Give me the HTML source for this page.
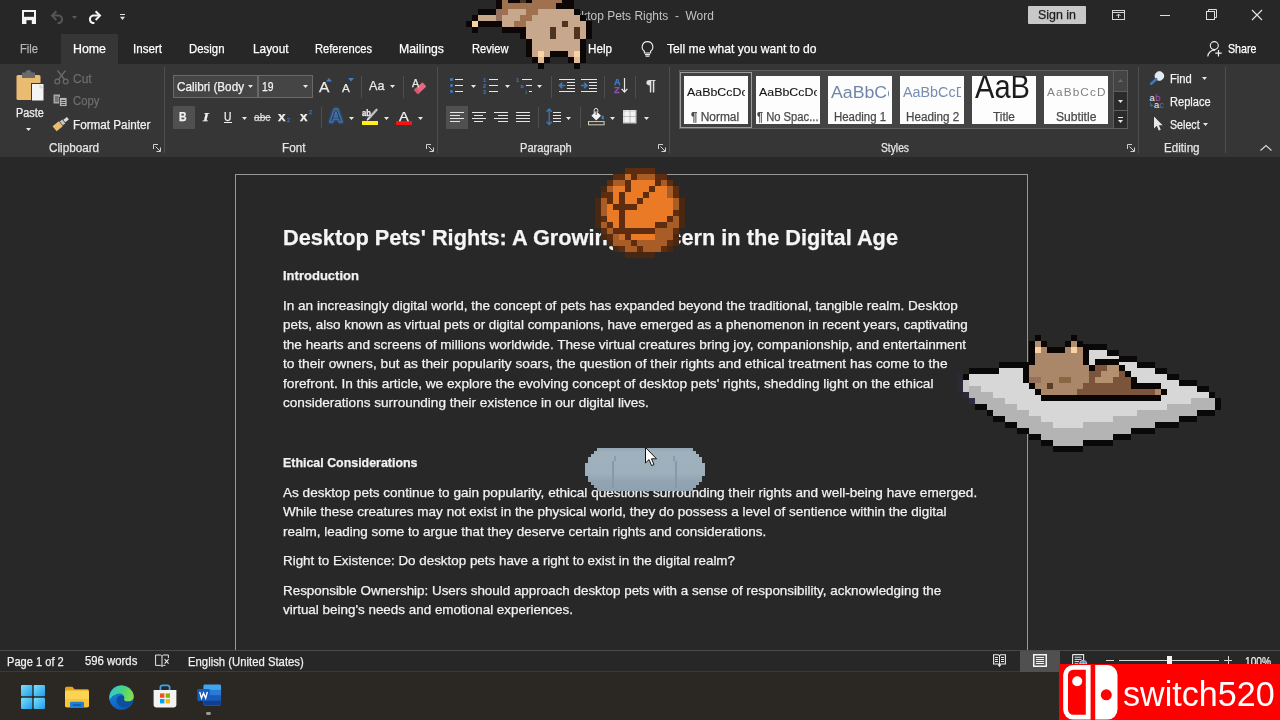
<!DOCTYPE html>
<html><head><meta charset="utf-8"><title>Desktop Pets Rights - Word</title>
<style>
*{box-sizing:border-box;margin:0;padding:0}
html,body{width:1280px;height:720px;overflow:hidden;background:#262626;font-family:"Liberation Sans",sans-serif;color:#fff}
#root{position:absolute;left:0;top:0;width:1280px;height:720px;overflow:hidden;background:#262626}
.a{position:absolute}
.t{position:absolute;white-space:pre;line-height:1;transform-origin:0 0;color:#fff;-webkit-text-stroke:0.25px currentColor}
.sep{position:absolute;width:1px;background:#555}
svg{position:absolute;overflow:visible}
.px{shape-rendering:crispEdges}
</style></head><body><div id="root">

<div class="a" style="left:0px;top:0px;width:1280px;height:64px;background:#272727;"></div>
<div class="a" style="left:61px;top:34px;width:57px;height:30px;background:#363636;"></div>
<div class="a" style="left:0px;top:64px;width:1280px;height:93px;background:#363636;"></div>
<div class="a" style="left:0px;top:157px;width:1280px;height:493px;background:#282828;"></div>
<div class="a" style="left:235px;top:174px;width:793px;height:1px;background:#989898;"></div>
<div class="a" style="left:235px;top:174px;width:1px;height:476px;background:#989898;"></div>
<div class="a" style="left:1027px;top:174px;width:1px;height:476px;background:#989898;"></div>
<div class="a" style="left:0px;top:650px;width:1280px;height:22px;background:#272727;border-top:1px solid #4a4a4a;border-bottom:1px solid #3a3a3a;"></div>
<div class="a" style="left:1020px;top:651px;width:40px;height:21px;background:#505050;"></div>
<div class="a" style="left:0px;top:672px;width:1280px;height:48px;background:#2b2723;"></div>
<svg style="left:22px;top:10px;" width="14" height="14" viewBox="0 0 14 14"><rect x="1" y="1" width="12" height="12" fill="none" stroke="#f4f4f4" stroke-width="2"/><rect x="1" y="6.8" width="12" height="7.2" fill="#f4f4f4"/><rect x="4.4" y="10.2" width="5.4" height="3.8" fill="#262626"/><rect x="10.6" y="0" width="3.4" height="2" fill="#f4f4f4"/></svg>
<svg style="left:50px;top:10px;" width="16" height="14" viewBox="0 0 16 14"><path d="M2,5.6 H9.4 A3.9,3.9 0 0 1 9.4,13 H7.6" fill="none" stroke="#565656" stroke-width="2"/><path d="M6.4,1.2 L2,5.6 L6.4,10" fill="none" stroke="#565656" stroke-width="2"/></svg>
<svg style="left:72px;top:15.6px;" width="5" height="3" viewBox="0 0 5 3"><path d="M0,0 L5,0 L2.5,3 Z" fill="#5c5c5c"/></svg>
<svg style="left:86px;top:10px;" width="16" height="14" viewBox="0 0 16 14"><path d="M14,5.6 H6.6 A3.9,3.9 0 0 0 6.6,13 H8.4" fill="none" stroke="#f4f4f4" stroke-width="2"/><path d="M9.6,1.2 L14,5.6 L9.6,10" fill="none" stroke="#f4f4f4" stroke-width="2"/></svg>
<svg style="left:120px;top:14.2px;" width="6" height="7" viewBox="0 0 6 7"><rect x="0" y="0" width="5" height="1" fill="#e0e0e0"/><path d="M0,2.8 L5,2.8 L2.5,6 Z" fill="#e0e0e0"/></svg>
<div class="a" style="left:1028px;top:6px;width:58px;height:18px;background:#c8c8c8;border-radius:1px;"></div>
<svg style="left:1112px;top:10px;" width="13" height="10" viewBox="0 0 13 10"><rect x="0.5" y="0.5" width="12" height="9" fill="none" stroke="#d8d8d8"/><path d="M0.5,2.5 H12.5" stroke="#d8d8d8"/><path d="M6.5,8 V4.2 M4.5,6 L6.5,4 L8.5,6" fill="none" stroke="#d8d8d8"/></svg>
<div class="a" style="left:1160px;top:15px;width:10px;height:1px;background:#e0e0e0;"></div>
<svg style="left:1206px;top:9px;" width="11" height="11" viewBox="0 0 11 11"><rect x="0.5" y="2.5" width="8" height="8" fill="none" stroke="#e0e0e0"/><path d="M2.5,2.5 V0.5 H10.5 V8.5 H8.5" fill="none" stroke="#e0e0e0"/></svg>
<svg style="left:1252px;top:10px;" width="10" height="10" viewBox="0 0 10 10"><path d="M0,0 L10,10 M10,0 L0,10" stroke="#e6e6e6" stroke-width="1.1"/></svg>
<svg style="left:641px;top:41px;" width="13" height="16" viewBox="0 0 13 16"><path d="M6.5,0.6 A5.3,5.3 0 0 1 9.6,10.2 V12 H3.4 V10.2 A5.3,5.3 0 0 1 6.5,0.6 Z" fill="none" stroke="#f0f0f0" stroke-width="1.1"/><path d="M4,13.6 H9 M4.6,15.3 H8.4" stroke="#f0f0f0" stroke-width="1.1"/></svg>
<svg style="left:1207px;top:41px;" width="16" height="17" viewBox="0 0 16 17"><circle cx="7.3" cy="4.6" r="4" fill="none" stroke="#f0f0f0" stroke-width="1.1"/><path d="M0.8,15.5 A6.6,6.6 0 0 1 8.2,9.2" fill="none" stroke="#f0f0f0" stroke-width="1.1"/><path d="M11.5,9 V15.4 M8.3,12.2 H14.7" stroke="#f0f0f0" stroke-width="1.2"/></svg>
<svg style="left:16px;top:71px;" width="29" height="31" viewBox="0 0 29 31"><rect x="0.5" y="4" width="24" height="25" rx="1.5" fill="#e9bc72"/><path d="M6,1.5 H9.5 A3,2.6 0 0 1 15.5,1.5 H19 V7 H6 Z" fill="#6a6a6a"/><rect x="15.5" y="12.5" width="12.5" height="17.5" fill="#f4f4f4" stroke="#363636" stroke-width="1"/><path d="M23.5,13 V17.5 H28" fill="#d8d8d8" stroke="none"/></svg>
<svg style="left:26px;top:127.5px;" width="5" height="3" viewBox="0 0 5 3"><path d="M0,0 L5,0 L2.5,3 Z" fill="#e8e8e8"/></svg>
<svg style="left:54px;top:70px;" width="15" height="15" viewBox="0 0 15 15"><path d="M3.5,0.5 L10.5,9.5 M11.5,0.5 L4.5,9.5" stroke="#6a6a6a" stroke-width="1.3" fill="none"/><circle cx="3.3" cy="11.6" r="2.4" fill="none" stroke="#6a6a6a" stroke-width="1.2"/><circle cx="11.7" cy="11.6" r="2.4" fill="none" stroke="#6a6a6a" stroke-width="1.2"/></svg>
<svg style="left:53px;top:94px;" width="15" height="13" viewBox="0 0 15 13"><rect x="0.5" y="0.5" width="6.5" height="9" fill="#a8a8a8"/><path d="M2,3 H5.5 M2,5 H5.5 M2,7 H5.5" stroke="#363636" stroke-width="0.9"/><rect x="6.5" y="3.5" width="7.5" height="9" fill="#b8b8b8" stroke="#363636" stroke-width="0.8"/><path d="M8.3,6.5 H12.3 M8.3,8.5 H12.3 M8.3,10.5 H12.3" stroke="#363636" stroke-width="0.9"/></svg>
<svg style="left:53px;top:116px;" width="17" height="15" viewBox="0 0 17 15"><g transform="rotate(-38 8 8)"><rect x="0" y="4.5" width="8" height="6.5" fill="#e9bc72"/><rect x="8.6" y="5.2" width="3.2" height="5" fill="#c4c4c4"/><rect x="12.4" y="6.2" width="4.6" height="3" fill="#dcdcdc"/></g></svg>
<svg style="left:153px;top:144px;" width="8" height="8" viewBox="0 0 8 8"><path d="M0.5,5 V0.5 H5" fill="none" stroke="#d0d0d0" stroke-width="1"/><path d="M2.5,2.5 L7,7 M7.5,3.5 V7.5 H3.5" fill="none" stroke="#d0d0d0" stroke-width="1"/></svg>
<div class="a" style="left:164px;top:67px;width:1px;height:86px;background:#4f4f4f;"></div>
<div class="a" style="left:173px;top:75px;width:85px;height:23px;background:#454545;border:1px solid #696969;"></div>
<div class="a" style="left:258px;top:75px;width:55px;height:23px;background:#454545;border:1px solid #696969;border-left:1px solid #696969;"></div>
<svg style="left:248px;top:85px;" width="5" height="3" viewBox="0 0 5 3"><path d="M0,0 L5,0 L2.5,3 Z" fill="#e8e8e8"/></svg>
<svg style="left:303px;top:85px;" width="5" height="3" viewBox="0 0 5 3"><path d="M0,0 L5,0 L2.5,3 Z" fill="#e8e8e8"/></svg>
<svg style="left:326px;top:78px;" width="6" height="4" viewBox="0 0 6 4"><path d="M0,3.6 L3,0 L6,3.6 Z" fill="#3e7fc8"/></svg>
<svg style="left:348px;top:78px;" width="6" height="4" viewBox="0 0 6 4"><path d="M0,0 L6,0 L3,3.6 Z" fill="#3e7fc8"/></svg>
<div class="a" style="left:361px;top:76px;width:1px;height:22px;background:#4f4f4f;"></div>
<svg style="left:389.5px;top:85px;" width="5" height="3" viewBox="0 0 5 3"><path d="M0,0 L5,0 L2.5,3 Z" fill="#e8e8e8"/></svg>
<div class="a" style="left:403px;top:76px;width:1px;height:22px;background:#4f4f4f;"></div>
<svg style="left:413px;top:80px;" width="16" height="15" viewBox="0 0 16 15"><g transform="rotate(-42 8 8)"><rect x="1.5" y="4.6" width="11.5" height="6" rx="0.8" fill="#e8677d"/><rect x="1.5" y="4.6" width="3.2" height="6" fill="#d6566c"/></g></svg>
<div class="a" style="left:173px;top:106px;width:22px;height:23px;background:#505050;"></div>
<div class="a" style="left:223.5px;top:122.3px;width:8px;height:1px;background:#f0f0f0;"></div>
<svg style="left:241.6px;top:116.5px;" width="5" height="3" viewBox="0 0 5 3"><path d="M0,0 L5,0 L2.5,3 Z" fill="#e8e8e8"/></svg>
<div class="a" style="left:253.5px;top:117px;width:17.5px;height:1px;background:#dcdcdc;"></div>
<div class="a" style="left:321px;top:107px;width:1px;height:21px;background:#4f4f4f;"></div>
<svg style="left:328px;top:107px;" width="18" height="18" viewBox="0 0 18 18"><defs><filter id="gl" x="-30%" y="-30%" width="160%" height="160%"><feGaussianBlur stdDeviation="1.1"/></filter></defs><text x="1.6" y="15.4" font-family="Liberation Sans" font-size="18" font-weight="700" fill="none" stroke="#2f66ad" stroke-width="2.4" filter="url(#gl)" opacity="0.8" textLength="13" lengthAdjust="spacingAndGlyphs">A</text><text x="1.6" y="15.4" font-family="Liberation Sans" font-size="18" font-weight="700" fill="#363636" stroke="#3f7dc4" stroke-width="1" textLength="13" lengthAdjust="spacingAndGlyphs">A</text></svg>
<svg style="left:349px;top:116.5px;" width="5" height="3" viewBox="0 0 5 3"><path d="M0,0 L5,0 L2.5,3 Z" fill="#e8e8e8"/></svg>
<svg style="left:365px;top:109px;" width="13" height="12" viewBox="0 0 13 12"><path d="M11.6,0.8 L3.6,9.6" stroke="#bdbdbd" stroke-width="2.4" stroke-linecap="round"/><path d="M3.8,9.2 L2,11.4" stroke="#e8e8e8" stroke-width="1.4"/></svg>
<div class="a" style="left:362px;top:121px;width:16.4px;height:4px;background:#ffee1a;"></div>
<svg style="left:384px;top:116.5px;" width="5" height="3" viewBox="0 0 5 3"><path d="M0,0 L5,0 L2.5,3 Z" fill="#e8e8e8"/></svg>
<div class="a" style="left:396px;top:121px;width:16.4px;height:4.2px;background:#f01414;"></div>
<svg style="left:418px;top:116.5px;" width="5" height="3" viewBox="0 0 5 3"><path d="M0,0 L5,0 L2.5,3 Z" fill="#e8e8e8"/></svg>
<svg style="left:426px;top:144px;" width="8" height="8" viewBox="0 0 8 8"><path d="M0.5,5 V0.5 H5" fill="none" stroke="#d0d0d0" stroke-width="1"/><path d="M2.5,2.5 L7,7 M7.5,3.5 V7.5 H3.5" fill="none" stroke="#d0d0d0" stroke-width="1"/></svg>
<div class="a" style="left:437px;top:67px;width:1px;height:86px;background:#4f4f4f;"></div>
<svg style="left:450px;top:79px;" width="18" height="16" viewBox="0 0 18 16"><rect x="0" y="-1" width="3" height="3" rx="1.2" fill="#3c79bd"/><rect x="5" y="0" width="8" height="1" fill="#e6e6e6" shape-rendering="crispEdges"/><rect x="0" y="5" width="3" height="3" rx="1.2" fill="#3c79bd"/><rect x="5" y="6" width="8" height="1" fill="#e6e6e6" shape-rendering="crispEdges"/><rect x="0" y="11" width="3" height="3" rx="1.2" fill="#3c79bd"/><rect x="5" y="12" width="8" height="1" fill="#e6e6e6" shape-rendering="crispEdges"/></svg>
<svg style="left:471px;top:85px;" width="5" height="3" viewBox="0 0 5 3"><path d="M0,0 L5,0 L2.5,3 Z" fill="#e8e8e8"/></svg>
<svg style="left:483px;top:79px;" width="18" height="16" viewBox="0 0 18 16"><text x="0" y="2.6" font-family="Liberation Sans" font-size="5.8" font-weight="700" fill="#3c79bd">1</text><rect x="6" y="0" width="9" height="1" fill="#e6e6e6" shape-rendering="crispEdges"/><text x="0" y="8.6" font-family="Liberation Sans" font-size="5.8" font-weight="700" fill="#3c79bd">2</text><rect x="6" y="6" width="9" height="1" fill="#e6e6e6" shape-rendering="crispEdges"/><text x="0" y="14.6" font-family="Liberation Sans" font-size="5.8" font-weight="700" fill="#3c79bd">3</text><rect x="6" y="12" width="9" height="1" fill="#e6e6e6" shape-rendering="crispEdges"/></svg>
<svg style="left:505px;top:85px;" width="5" height="3" viewBox="0 0 5 3"><path d="M0,0 L5,0 L2.5,3 Z" fill="#e8e8e8"/></svg>
<svg style="left:516px;top:79px;" width="18" height="16" viewBox="0 0 18 16"><text x="0" y="3.2" font-family="Liberation Sans" font-size="5.8" font-weight="700" fill="#3c79bd">1</text><rect x="6" y="0" width="10" height="1" fill="#e6e6e6" shape-rendering="crispEdges"/><text x="4.6" y="9" font-family="Liberation Sans" font-size="5.8" font-weight="700" fill="#3c79bd">a</text><rect x="10" y="6" width="6" height="1" fill="#e6e6e6" shape-rendering="crispEdges"/><text x="9.6" y="14.8" font-family="Liberation Sans" font-size="5.8" font-weight="700" fill="#3c79bd">i</text><rect x="13" y="12" width="3" height="1" fill="#e6e6e6" shape-rendering="crispEdges"/></svg>
<svg style="left:537.2px;top:85px;" width="5" height="3" viewBox="0 0 5 3"><path d="M0,0 L5,0 L2.5,3 Z" fill="#e8e8e8"/></svg>
<div class="a" style="left:551px;top:76px;width:1px;height:22px;background:#4f4f4f;"></div>
<svg style="left:559px;top:79px;" width="16" height="14" viewBox="0 0 16 14"><g shape-rendering="crispEdges"><rect x="0" y="0" width="16" height="1" fill="#e6e6e6"/><rect x="0" y="12" width="16" height="1" fill="#e6e6e6"/><rect x="8" y="3" width="8" height="1" fill="#e6e6e6"/><rect x="8" y="6" width="8" height="1" fill="#e6e6e6"/><rect x="8" y="9" width="8" height="1" fill="#e6e6e6"/></g><path d="M6.4,6.5 H0.8 M3.2,3.8 L0.5,6.5 L3.2,9.2" fill="none" stroke="#3c79bd" stroke-width="1.7"/></svg>
<svg style="left:581px;top:79px;" width="16" height="14" viewBox="0 0 16 14"><g shape-rendering="crispEdges"><rect x="0" y="0" width="16" height="1" fill="#e6e6e6"/><rect x="0" y="12" width="16" height="1" fill="#e6e6e6"/><rect x="8" y="3" width="8" height="1" fill="#e6e6e6"/><rect x="8" y="6" width="8" height="1" fill="#e6e6e6"/><rect x="8" y="9" width="8" height="1" fill="#e6e6e6"/></g><path d="M0,6.5 H5.6 M3.2,3.8 L5.9,6.5 L3.2,9.2" fill="none" stroke="#3c79bd" stroke-width="1.7"/></svg>
<div class="a" style="left:604px;top:76px;width:1px;height:22px;background:#4f4f4f;"></div>
<svg style="left:621px;top:78px;" width="7" height="15" viewBox="0 0 7 15"><path d="M3.5,0 V14 M0.6,10.8 L3.5,14 L6.4,10.8" fill="none" stroke="#e8e8e8" stroke-width="1.2"/></svg>
<div class="a" style="left:635px;top:76px;width:1px;height:22px;background:#4f4f4f;"></div>
<div class="a" style="left:446px;top:106px;width:22px;height:23px;background:#505050;"></div>
<svg style="left:450px;top:112px;" width="15" height="12" viewBox="0 0 15 12"><rect x="0" y="0" width="14" height="1" fill="#e6e6e6" shape-rendering="crispEdges"/><rect x="0" y="3" width="10" height="1" fill="#e6e6e6" shape-rendering="crispEdges"/><rect x="0" y="6" width="14" height="1" fill="#e6e6e6" shape-rendering="crispEdges"/><rect x="0" y="9" width="10" height="1" fill="#e6e6e6" shape-rendering="crispEdges"/></svg>
<svg style="left:472px;top:112px;" width="15" height="12" viewBox="0 0 15 12"><rect x="0" y="0" width="14" height="1" fill="#e6e6e6" shape-rendering="crispEdges"/><rect x="2" y="3" width="9" height="1" fill="#e6e6e6" shape-rendering="crispEdges"/><rect x="0" y="6" width="14" height="1" fill="#e6e6e6" shape-rendering="crispEdges"/><rect x="2" y="9" width="9" height="1" fill="#e6e6e6" shape-rendering="crispEdges"/></svg>
<svg style="left:494px;top:112px;" width="15" height="12" viewBox="0 0 15 12"><rect x="0" y="0" width="14" height="1" fill="#e6e6e6" shape-rendering="crispEdges"/><rect x="4" y="3" width="10" height="1" fill="#e6e6e6" shape-rendering="crispEdges"/><rect x="0" y="6" width="14" height="1" fill="#e6e6e6" shape-rendering="crispEdges"/><rect x="4" y="9" width="10" height="1" fill="#e6e6e6" shape-rendering="crispEdges"/></svg>
<svg style="left:516px;top:112px;" width="15" height="12" viewBox="0 0 15 12"><rect x="0" y="0" width="14" height="1" fill="#e6e6e6" shape-rendering="crispEdges"/><rect x="0" y="3" width="14" height="1" fill="#e6e6e6" shape-rendering="crispEdges"/><rect x="0" y="6" width="14" height="1" fill="#e6e6e6" shape-rendering="crispEdges"/><rect x="0" y="9" width="14" height="1" fill="#e6e6e6" shape-rendering="crispEdges"/></svg>
<div class="a" style="left:538px;top:107px;width:1px;height:21px;background:#4f4f4f;"></div>
<svg style="left:546px;top:108px;" width="16" height="18" viewBox="0 0 16 18"><path d="M3.2,1 V16.6 M0.6,3.8 L3.2,1 L5.8,3.8 M0.6,13.8 L3.2,16.6 L5.8,13.8" fill="none" stroke="#3c79bd" stroke-width="1.25"/><rect x="7" y="4" width="8" height="1" fill="#e6e6e6" shape-rendering="crispEdges"/><rect x="7" y="7" width="8" height="1" fill="#e6e6e6" shape-rendering="crispEdges"/><rect x="7" y="10" width="8" height="1" fill="#e6e6e6" shape-rendering="crispEdges"/><rect x="7" y="13" width="8" height="1" fill="#e6e6e6" shape-rendering="crispEdges"/></svg>
<svg style="left:566px;top:116.5px;" width="5" height="3" viewBox="0 0 5 3"><path d="M0,0 L5,0 L2.5,3 Z" fill="#e8e8e8"/></svg>
<div class="a" style="left:580px;top:107px;width:1px;height:21px;background:#4f4f4f;"></div>
<svg style="left:588px;top:108px;" width="18" height="18" viewBox="0 0 18 18"><path d="M8.2,3 L13,7.8 L8.2,12.6 L3.4,7.8 Z" fill="#f4f4f4"/><path d="M6.2,5 V2.2 A1.8,1.8 0 0 1 9.8,2.2 V4" fill="none" stroke="#e0e0e0" stroke-width="1"/><path d="M8.2,3.4 V7" stroke="#363636" stroke-width="0.9"/><path d="M14.8,7 C16.4,9.4 16.6,10.8 14.8,11.6 C13,10.8 13.2,9.4 14.8,7 Z" fill="#3e7fc8"/><rect x="0.5" y="13.6" width="15.6" height="3.2" fill="none" stroke="#d9cdbb" stroke-width="1"/></svg>
<svg style="left:610px;top:116.5px;" width="5" height="3" viewBox="0 0 5 3"><path d="M0,0 L5,0 L2.5,3 Z" fill="#e8e8e8"/></svg>
<svg style="left:623px;top:110px;" width="13.4" height="13.4" viewBox="0 0 13.4 13.4"><rect x="0" y="0" width="13.4" height="13.4" fill="#f2f2f2"/><rect x="0.5" y="6" width="1" height="1" fill="#8c8c8c"/><rect x="6.5" y="0.5" width="1" height="1" fill="#8c8c8c"/><rect x="0.5" y="0.5" width="1" height="1" fill="#a8a8a8"/><rect x="0.5" y="12" width="1" height="1" fill="#a8a8a8"/><rect x="0.5" y="0.5" width="1" height="1" fill="#a8a8a8"/><rect x="12" y="0.5" width="1" height="1" fill="#a8a8a8"/><rect x="2.5" y="6" width="1" height="1" fill="#8c8c8c"/><rect x="6.5" y="2.5" width="1" height="1" fill="#8c8c8c"/><rect x="2.5" y="0.5" width="1" height="1" fill="#a8a8a8"/><rect x="2.5" y="12" width="1" height="1" fill="#a8a8a8"/><rect x="0.5" y="2.5" width="1" height="1" fill="#a8a8a8"/><rect x="12" y="2.5" width="1" height="1" fill="#a8a8a8"/><rect x="4.5" y="6" width="1" height="1" fill="#8c8c8c"/><rect x="6.5" y="4.5" width="1" height="1" fill="#8c8c8c"/><rect x="4.5" y="0.5" width="1" height="1" fill="#a8a8a8"/><rect x="4.5" y="12" width="1" height="1" fill="#a8a8a8"/><rect x="0.5" y="4.5" width="1" height="1" fill="#a8a8a8"/><rect x="12" y="4.5" width="1" height="1" fill="#a8a8a8"/><rect x="6.5" y="6" width="1" height="1" fill="#8c8c8c"/><rect x="6.5" y="6.5" width="1" height="1" fill="#8c8c8c"/><rect x="6.5" y="0.5" width="1" height="1" fill="#a8a8a8"/><rect x="6.5" y="12" width="1" height="1" fill="#a8a8a8"/><rect x="0.5" y="6.5" width="1" height="1" fill="#a8a8a8"/><rect x="12" y="6.5" width="1" height="1" fill="#a8a8a8"/><rect x="8.5" y="6" width="1" height="1" fill="#8c8c8c"/><rect x="6.5" y="8.5" width="1" height="1" fill="#8c8c8c"/><rect x="8.5" y="0.5" width="1" height="1" fill="#a8a8a8"/><rect x="8.5" y="12" width="1" height="1" fill="#a8a8a8"/><rect x="0.5" y="8.5" width="1" height="1" fill="#a8a8a8"/><rect x="12" y="8.5" width="1" height="1" fill="#a8a8a8"/><rect x="10.5" y="6" width="1" height="1" fill="#8c8c8c"/><rect x="6.5" y="10.5" width="1" height="1" fill="#8c8c8c"/><rect x="10.5" y="0.5" width="1" height="1" fill="#a8a8a8"/><rect x="10.5" y="12" width="1" height="1" fill="#a8a8a8"/><rect x="0.5" y="10.5" width="1" height="1" fill="#a8a8a8"/><rect x="12" y="10.5" width="1" height="1" fill="#a8a8a8"/><rect x="12.5" y="6" width="1" height="1" fill="#8c8c8c"/><rect x="6.5" y="12.5" width="1" height="1" fill="#8c8c8c"/><rect x="12.5" y="0.5" width="1" height="1" fill="#a8a8a8"/><rect x="12.5" y="12" width="1" height="1" fill="#a8a8a8"/><rect x="0.5" y="12.5" width="1" height="1" fill="#a8a8a8"/><rect x="12" y="12.5" width="1" height="1" fill="#a8a8a8"/></svg>
<svg style="left:644px;top:116.5px;" width="5" height="3" viewBox="0 0 5 3"><path d="M0,0 L5,0 L2.5,3 Z" fill="#e8e8e8"/></svg>
<svg style="left:658px;top:144px;" width="8" height="8" viewBox="0 0 8 8"><path d="M0.5,5 V0.5 H5" fill="none" stroke="#d0d0d0" stroke-width="1"/><path d="M2.5,2.5 L7,7 M7.5,3.5 V7.5 H3.5" fill="none" stroke="#d0d0d0" stroke-width="1"/></svg>
<div class="a" style="left:669px;top:67px;width:1px;height:86px;background:#4f4f4f;"></div>
<div class="a" style="left:679px;top:70px;width:449px;height:59px;background:#444444;border:1px solid #5e5e5e;"></div>
<div class="a" style="left:680px;top:72px;width:72px;height:56px;background:#414141;border:1px solid #9c9c9c;"></div>
<div class="a" id="tile684" style="left:684px;top:76px;width:64px;height:48px;background:#fdfdfd;overflow:hidden"></div>
<div class="a" id="tile756" style="left:756px;top:76px;width:64px;height:48px;background:#fdfdfd;overflow:hidden"></div>
<div class="a" id="tile828" style="left:828px;top:76px;width:64px;height:48px;background:#fdfdfd;overflow:hidden"></div>
<div class="a" id="tile900" style="left:900px;top:76px;width:64px;height:48px;background:#fdfdfd;overflow:hidden"></div>
<div class="a" id="tile972" style="left:972px;top:76px;width:64px;height:48px;background:#fdfdfd;overflow:hidden"></div>
<div class="a" id="tile1044" style="left:1044px;top:76px;width:64px;height:48px;background:#fdfdfd;overflow:hidden"></div>
<div class="a" style="left:1113px;top:70px;width:15px;height:59px;background:#444;border:1px solid #5e5e5e;"></div>
<div class="a" style="left:1114px;top:91px;width:13px;height:19px;background:#2b2b2b;border-top:1px solid #5e5e5e;"></div>
<div class="a" style="left:1114px;top:110px;width:13px;height:18px;background:#2b2b2b;border-top:1px solid #5e5e5e;"></div>
<svg style="left:1118px;top:79px;" width="5" height="3" viewBox="0 0 5 3"><path d="M0,3 L5,3 L2.5,0 Z" fill="#6a6a6a"/></svg>
<svg style="left:1118px;top:100px;" width="5" height="3" viewBox="0 0 5 3"><path d="M0,0 L5,0 L2.5,3 Z" fill="#e8e8e8"/></svg>
<div class="a" style="left:1118px;top:117px;width:5px;height:1px;background:#e8e8e8;"></div>
<svg style="left:1118px;top:119.6px;" width="5" height="3" viewBox="0 0 5 3"><path d="M0,0 L5,0 L2.5,3 Z" fill="#e8e8e8"/></svg>
<svg style="left:1127px;top:144px;" width="8" height="8" viewBox="0 0 8 8"><path d="M0.5,5 V0.5 H5" fill="none" stroke="#d0d0d0" stroke-width="1"/><path d="M2.5,2.5 L7,7 M7.5,3.5 V7.5 H3.5" fill="none" stroke="#d0d0d0" stroke-width="1"/></svg>
<div class="a" style="left:1138px;top:67px;width:1px;height:86px;background:#4f4f4f;"></div>
<svg style="left:1150px;top:71px;" width="15" height="14" viewBox="0 0 15 14"><circle cx="9.4" cy="5" r="4.3" fill="#dfeaf5" stroke="#f8f8f8" stroke-width="1"/><path d="M6.2,8.2 L1.2,12.8" stroke="#3c79bd" stroke-width="2.6" stroke-linecap="round"/></svg>
<svg style="left:1202px;top:77px;" width="5" height="3" viewBox="0 0 5 3"><path d="M0,0 L5,0 L2.5,3 Z" fill="#e8e8e8"/></svg>
<svg style="left:1149px;top:94px;" width="18" height="15" viewBox="0 0 18 15"><text x="0.5" y="7" font-family="Liberation Sans" font-size="9.4" fill="#f0f0f0">a</text><text x="6.2" y="7" font-family="Liberation Sans" font-size="9.4" fill="#a055b8">b</text><text x="5" y="14" font-family="Liberation Sans" font-size="9.4" fill="#f0f0f0">a</text><text x="10.6" y="14" font-family="Liberation Sans" font-size="9.4" fill="#3c79bd">c</text><path d="M1.6,8.6 V11.6 H3.6 M2.6,10.4 L3.8,11.6 L2.6,12.8" fill="none" stroke="#3c79bd" stroke-width="0.9"/></svg>
<svg style="left:1153px;top:116px;" width="11" height="16" viewBox="0 0 11 16"><path d="M1,0.5 L1,12.4 L3.8,9.8 L5.8,14.6 L7.8,13.8 L5.8,9.2 L9.6,9.2 Z" fill="#e8e8e8"/></svg>
<svg style="left:1203px;top:123px;" width="5" height="3" viewBox="0 0 5 3"><path d="M0,0 L5,0 L2.5,3 Z" fill="#e8e8e8"/></svg>
<div class="a" style="left:1225px;top:67px;width:1px;height:86px;background:#4f4f4f;"></div>
<svg style="left:1260px;top:145px;" width="12" height="6" viewBox="0 0 12 6"><path d="M0.5,5.5 L6,0.5 L11.5,5.5" fill="none" stroke="#d8d8d8" stroke-width="1.1"/></svg>
<svg style="left:155px;top:654px;" width="16" height="14" viewBox="0 0 16 14"><path d="M0.6,1 H5.6 L7,2.2 V12.4 L5.6,11.4 H0.6 Z" fill="none" stroke="#e8e8e8" stroke-width="1"/><path d="M7,2.2 L8.4,1 H13.4 V4" fill="none" stroke="#e8e8e8" stroke-width="1"/><path d="M9.6,5.2 L13.6,9.6 M13.6,5.2 L9.6,9.6" stroke="#e8e8e8" stroke-width="1.1"/><path d="M7,12.4 L8.4,11.4 H10.4" fill="none" stroke="#e8e8e8" stroke-width="1"/></svg>
<svg style="left:993px;top:654.0px;" width="13" height="13" viewBox="0 0 13 13"><path d="M0.6,0.8 H5.4 L6.5,1.8 L7.6,0.8 H12.4 V10 H7.6 L6.5,11 L5.4,10 H0.6 Z" fill="none" stroke="#e8e8e8" stroke-width="1.1"/><path d="M6.5,1.8 V12.4 M5.2,11.2 L6.5,12.6 L7.8,11.2" stroke="#e8e8e8" fill="none"/><path d="M2.2,3.5 H5 M2.2,5.5 H5 M2.2,7.5 H5 M8,3.5 H10.8 M8,5.5 H10.8 M8,7.5 H10.8" stroke="#e8e8e8" stroke-width="1" shape-rendering="crispEdges"/></svg>
<svg style="left:1033px;top:654px;" width="14" height="13" viewBox="0 0 14 13"><rect x="0.75" y="0.75" width="12.5" height="11.5" fill="none" stroke="#f4f4f4" stroke-width="1.5"/><path d="M3,3.5 H11 M3,5.5 H11 M3,7.5 H11 M3,9.5 H11" stroke="#f4f4f4" stroke-width="1" shape-rendering="crispEdges"/></svg>
<svg style="left:1072px;top:654px;" width="16" height="14" viewBox="0 0 16 14"><path d="M0.6,0.6 H11.6 V6 M0.6,0.6 V12.4 H7" fill="none" stroke="#e8e8e8" stroke-width="1.1"/><path d="M2.6,3.2 H9.6 M2.6,5.4 H9.6 M2.6,7.6 H7.2 M2.6,9.8 H6.4" stroke="#e8e8e8" stroke-width="1"/><circle cx="11.2" cy="10" r="3.6" fill="#3d7cc4" stroke="#e8e8e8" stroke-width="0.8"/><path d="M8,9.4 H14.4 M11.2,6.6 V13.4" stroke="#e8e8e8" stroke-width="0.6"/></svg>
<div class="a" style="left:1106px;top:660px;width:8px;height:1px;background:#d8d8d8;"></div>
<div class="a" style="left:1119px;top:660px;width:100px;height:1px;background:#d4d4d4;"></div>
<div class="a" style="left:1167px;top:656px;width:5px;height:10px;background:#f4f4f4;"></div>
<div class="a" style="left:1224px;top:660px;width:8px;height:1px;background:#d8d8d8;"></div>
<div class="a" style="left:1228px;top:656px;width:1px;height:9px;background:#d8d8d8;"></div>
<svg style="left:20.5px;top:684.5px;" width="24" height="24" viewBox="0 0 24 24"><defs><linearGradient id="wg" x1="0" y1="0" x2="1" y2="1"><stop offset="0" stop-color="#7fe0fb"/><stop offset="1" stop-color="#1d9ceb"/></linearGradient></defs><g fill="url(#wg)"><rect x="0" y="0" width="11.3" height="11.3" rx="1"/><rect x="12.7" y="0" width="11.3" height="11.3" rx="1"/><rect x="0" y="12.7" width="11.3" height="11.3" rx="1"/><rect x="12.7" y="12.7" width="11.3" height="11.3" rx="1"/></g></svg>
<svg style="left:64px;top:685px;" width="26" height="24" viewBox="0 0 26 24"><path d="M1,3.4 A1.6,1.6 0 0 1 2.6,1.8 H8.4 L10.6,4.2 H23.4 A1.6,1.6 0 0 1 25,5.8 V8 H1 Z" fill="#e6a41c"/><rect x="1" y="5.6" width="24" height="16.6" rx="1.6" fill="#fdd353"/><path d="M1,14 H25 V20.6 A1.6,1.6 0 0 1 23.4,22.2 H2.6 A1.6,1.6 0 0 1 1,20.6 Z" fill="#f8c534"/><path d="M6,22.2 V18.2 A1.4,1.4 0 0 1 7.4,16.8 H18.6 A1.4,1.4 0 0 1 20,18.2 V22.2 Z" fill="#1f7fd6"/><rect x="8.6" y="19.2" width="8.8" height="1.6" rx="0.8" fill="#0f5aa8"/></svg>
<svg style="left:108.5px;top:684.5px;" width="25" height="25" viewBox="0 0 25 25"><defs><linearGradient id="eg1" x1="0" y1="0" x2="1" y2="0.3"><stop offset="0" stop-color="#2fc4e8"/><stop offset="0.6" stop-color="#49d47a"/><stop offset="1" stop-color="#7fdc52"/></linearGradient><linearGradient id="eg2" x1="0" y1="0" x2="0.6" y2="1"><stop offset="0" stop-color="#1c8fe0"/><stop offset="1" stop-color="#0c58b6"/></linearGradient></defs><circle cx="12.5" cy="12.5" r="12.3" fill="url(#eg2)"/><path d="M0.4,11 A12.3,12.3 0 0 1 24.7,10.6 C25,14.6 22.6,16.6 19,16.6 C15.4,16.6 14.4,14.8 15.2,13.4 C16,12 14.4,8.6 10.6,8.6 C5.6,8.6 1.8,12.6 0.4,15 Z" fill="url(#eg1)"/><path d="M15.2,13.4 C14.6,15 15.6,16.6 19,16.6 C21.4,16.6 23.2,15.8 24.2,14.4 C23,19.6 19,22.6 15,22.4 C10,22.2 7.2,18.4 7.6,14.6 C8,11.8 10.4,10.2 12.4,10.4 C14.6,10.6 15.6,12.2 15.2,13.4 Z" fill="#0d4f9e"/></svg>
<svg style="left:153px;top:683px;" width="24" height="26" viewBox="0 0 24 26"><path d="M7.4,7 V4.6 A2.2,2.2 0 0 1 9.6,2.4 H14.4 A2.2,2.2 0 0 1 16.6,4.6 V7" fill="none" stroke="#38a7e8" stroke-width="1.8"/><path d="M0.6,7 H23.4 V21.6 A3,3 0 0 1 20.4,24.6 H3.6 A3,3 0 0 1 0.6,21.6 Z" fill="#f3f3f3"/><rect x="7" y="10.4" width="4.4" height="4.4" fill="#f25022"/><rect x="12.6" y="10.4" width="4.4" height="4.4" fill="#7fba00"/><rect x="7" y="16" width="4.4" height="4.4" fill="#00a4ef"/><rect x="12.6" y="16" width="4.4" height="4.4" fill="#ffb900"/></svg>
<svg style="left:196.6px;top:684.4px" width="24.6" height="22" viewBox="0 0 27 25" preserveAspectRatio="none"><rect x="7" y="0.6" width="19.4" height="23.8" rx="1.6" fill="#41a5ee"/><path d="M7,6.6 H26.4 V12.6 H7 Z" fill="#2b7cd3"/><path d="M7,12.6 H26.4 V18.6 H7 Z" fill="#185abd"/><path d="M7,18.6 H26.4 V22.8 A1.6,1.6 0 0 1 24.8,24.4 H8.6 A1.6,1.6 0 0 1 7,22.8 Z" fill="#103f91"/><rect x="0.4" y="5.8" width="13.6" height="13.6" rx="1.4" fill="#185abd"/><path d="M3,9 L4.9,16.2 L7.2,10.4 L9.5,16.2 L11.4,9" fill="none" stroke="#fff" stroke-width="1.5" stroke-linejoin="miter"/></svg>
<div class="a" style="left:205.8px;top:712.2px;width:5.6px;height:2.8px;background:#9a9a9a;border-radius:1.4px;"></div>
<span class="t" id="t0" style="left:559.60px;top:9.03px;font-size:13.2px;color:#c2c2c2;transform:scaleX(0.9064);-webkit-text-stroke:0;">Desktop Pets Rights  -  Word</span>
<span class="t" id="t1" style="left:20.00px;top:42.00px;font-size:13px;color:#b6b6b6;transform:scaleX(0.8591);">File</span>
<span class="t" id="t2" style="left:73.00px;top:42.00px;font-size:13px;color:#fff;transform:scaleX(0.9514);">Home</span>
<span class="t" id="t3" style="left:133.00px;top:42.00px;font-size:13px;color:#fff;transform:scaleX(0.8919);">Insert</span>
<span class="t" id="t4" style="left:189.00px;top:42.00px;font-size:13px;color:#fff;transform:scaleX(0.8772);">Design</span>
<span class="t" id="t5" style="left:252.50px;top:42.00px;font-size:13px;color:#fff;transform:scaleX(0.9092);">Layout</span>
<span class="t" id="t6" style="left:315.00px;top:42.00px;font-size:13px;color:#fff;transform:scaleX(0.8573);">References</span>
<span class="t" id="t7" style="left:399.00px;top:42.00px;font-size:13px;color:#fff;transform:scaleX(0.9436);">Mailings</span>
<span class="t" id="t8" style="left:471.50px;top:42.00px;font-size:13px;color:#fff;transform:scaleX(0.8563);">Review</span>
<span class="t" id="t9" style="left:587.50px;top:42.00px;font-size:13px;color:#fff;transform:scaleX(0.8972);">Help</span>
<span class="t" id="t10" style="left:666.90px;top:42.00px;font-size:13px;color:#fff;transform:scaleX(0.9325);">Tell me what you want to do</span>
<span class="t" id="t11" style="left:1227.50px;top:42.00px;font-size:13px;color:#fff;transform:scaleX(0.8213);">Share</span>
<span class="t" id="t12" style="left:283.00px;top:227.44px;font-size:22.4px;color:#f5f5f5;font-weight:700;transform:scaleX(0.9707);">Desktop Pets&#x27; Rights: A Growing Concern in the Digital Age</span>
<span class="t" id="t13" style="left:283.00px;top:268.83px;font-size:13.2px;color:#f2f2f2;font-weight:700;transform:scaleX(0.9880);">Introduction</span>
<span class="t" id="t14" style="left:283.00px;top:299.03px;font-size:13.2px;color:#f2f2f2;transform:scaleX(1.0273);">In an increasingly digital world, the concept of pets has expanded beyond the traditional, tangible realm. Desktop</span>
<span class="t" id="t15" style="left:283.00px;top:318.43px;font-size:13.2px;color:#f2f2f2;transform:scaleX(1.0176);">pets, also known as virtual pets or digital companions, have emerged as a phenomenon in recent years, captivating</span>
<span class="t" id="t16" style="left:283.00px;top:337.83px;font-size:13.2px;color:#f2f2f2;transform:scaleX(1.0315);">the hearts and screens of millions worldwide. These virtual creatures bring joy, companionship, and entertainment</span>
<span class="t" id="t17" style="left:283.00px;top:357.23px;font-size:13.2px;color:#f2f2f2;transform:scaleX(1.0396);">to their owners, but as their popularity soars, the question of their rights and ethical treatment has come to the</span>
<span class="t" id="t18" style="left:283.00px;top:376.63px;font-size:13.2px;color:#f2f2f2;transform:scaleX(1.0360);">forefront. In this article, we explore the evolving concept of desktop pets&#x27; rights, shedding light on the ethical</span>
<span class="t" id="t19" style="left:283.00px;top:396.03px;font-size:13.2px;color:#f2f2f2;transform:scaleX(1.0289);">considerations surrounding their existence in our digital lives.</span>
<span class="t" id="t20" style="left:283.00px;top:456.03px;font-size:13.2px;color:#f2f2f2;font-weight:700;transform:scaleX(0.9412);">Ethical Considerations</span>
<span class="t" id="t21" style="left:283.00px;top:485.83px;font-size:13.2px;color:#f2f2f2;transform:scaleX(1.0285);">As desktop pets continue to gain popularity, ethical questions surrounding their rights and well-being have emerged.</span>
<span class="t" id="t22" style="left:283.00px;top:505.23px;font-size:13.2px;color:#f2f2f2;transform:scaleX(1.0241);">While these creatures may not exist in the physical world, they do possess a level of sentience within the digital</span>
<span class="t" id="t23" style="left:283.00px;top:524.63px;font-size:13.2px;color:#f2f2f2;transform:scaleX(1.0221);">realm, leading some to argue that they deserve certain rights and considerations.</span>
<span class="t" id="t24" style="left:283.00px;top:553.83px;font-size:13.2px;color:#f2f2f2;transform:scaleX(1.0158);">Right to Existence: Do desktop pets have a right to exist in the digital realm?</span>
<span class="t" id="t25" style="left:283.00px;top:583.63px;font-size:13.2px;color:#f2f2f2;transform:scaleX(1.0162);">Responsible Ownership: Users should approach desktop pets with a sense of responsibility, acknowledging the</span>
<span class="t" id="t26" style="left:283.00px;top:603.03px;font-size:13.2px;color:#f2f2f2;transform:scaleX(1.0184);">virtual being&#x27;s needs and emotional experiences.</span>
<span class="t" id="t27" style="left:7.00px;top:656.17px;font-size:12.2px;color:#f0f0f0;transform:scaleX(0.9111);">Page 1 of 2</span>
<span class="t" id="t28" style="left:84.50px;top:655.27px;font-size:12.2px;color:#f0f0f0;transform:scaleX(0.9300);">596 words</span>
<span class="t" id="t29" style="left:188.00px;top:656.17px;font-size:12.2px;color:#f0f0f0;transform:scaleX(0.9290);">English (United States)</span>
<span class="t" id="t30" style="left:1245.00px;top:656.17px;font-size:12.2px;color:#f0f0f0;transform:scaleX(0.8341);">100%</span>
<span class="t" id="t31" style="left:1123.00px;top:677.28px;font-size:34.4px;color:#fff;transform:scaleX(0.9913);z-index:50;-webkit-text-stroke:0;">switch520</span>
<span class="t" id="t32" style="left:1038.00px;top:9.10px;font-size:12.4px;color:#1e1e1e;transform:scaleX(1.0029);">Sign in</span>
<span class="t" id="t33" style="left:15.50px;top:106.64px;font-size:12px;color:#f2f2f2;transform:scaleX(0.9026);">Paste</span>
<span class="t" id="t34" style="left:73.00px;top:72.84px;font-size:12px;color:#6c6c6c;transform:scaleX(0.9953);">Cut</span>
<span class="t" id="t35" style="left:73.00px;top:94.64px;font-size:12px;color:#6c6c6c;transform:scaleX(0.9388);">Copy</span>
<span class="t" id="t36" style="left:72.80px;top:118.64px;font-size:12px;color:#f2f2f2;transform:scaleX(0.9753);">Format Painter</span>
<span class="t" id="t37" style="left:48.70px;top:142.44px;font-size:12px;color:#e6e6e6;transform:scaleX(0.9752);">Clipboard</span>
<span class="t" id="t38" style="left:176.60px;top:81.06px;font-size:12.1px;color:#f2f2f2;transform:scaleX(0.9677);">Calibri (Body</span>
<span class="t" id="t39" style="left:261.70px;top:81.06px;font-size:12.1px;color:#f2f2f2;transform:scaleX(0.8548);">19</span>
<span class="t" id="t40" style="left:318.60px;top:80.15px;font-size:14px;color:#ececec;transform:scaleX(1.1130);">A</span>
<span class="t" id="t41" style="left:342.20px;top:82.52px;font-size:11.2px;color:#ececec;transform:scaleX(1.0444);">A</span>
<span class="t" id="t42" style="left:369.00px;top:78.86px;font-size:13.4px;color:#ececec;transform:scaleX(0.9396);">Aa</span>
<span class="t" id="t43" style="left:412.40px;top:77.83px;font-size:10.6px;color:#e8e8e8;transform:scaleX(1.0172);">A</span>
<span class="t" id="t44" style="left:179.40px;top:110.97px;font-size:12.2px;color:#f0f0f0;font-weight:700;transform:scaleX(0.8624);">B</span>
<span class="t" id="t45" style="left:202.60px;top:110.63px;font-size:12.6px;color:#f0f0f0;font-style:italic;transform:scaleX(1.1822);font-family:'Liberation Serif',serif;font-weight:700;">I</span>
<span class="t" id="t46" style="left:223.80px;top:110.64px;font-size:12px;color:#f0f0f0;transform:scaleX(0.8533);">U</span>
<span class="t" id="t47" style="left:254.00px;top:112.03px;font-size:10.6px;color:#dcdcdc;transform:scaleX(0.9594);">abc</span>
<span class="t" id="t48" style="left:278.30px;top:110.63px;font-size:12.6px;color:#f0f0f0;font-weight:700;transform:scaleX(1.0690);">x</span>
<span class="t" id="t49" style="left:287.00px;top:118.49px;font-size:5.8px;color:#3a72b4;transform:scaleX(0.9894);">2</span>
<span class="t" id="t50" style="left:300.30px;top:110.63px;font-size:12.6px;color:#f0f0f0;font-weight:700;transform:scaleX(1.0690);">x</span>
<span class="t" id="t51" style="left:309.00px;top:110.29px;font-size:5.8px;color:#3a72b4;transform:scaleX(0.9894);">2</span>
<span class="t" id="t52" style="left:362.00px;top:108.72px;font-size:8.6px;color:#f2f2f2;font-weight:700;transform:scaleX(0.8773);">ab</span>
<span class="t" id="t53" style="left:399.40px;top:109.63px;font-size:13.2px;color:#f2f2f2;transform:scaleX(1.1140);">A</span>
<span class="t" id="t54" style="left:281.60px;top:142.44px;font-size:12px;color:#e6e6e6;transform:scaleX(0.9744);">Font</span>
<span class="t" id="t55" style="left:614.00px;top:76.84px;font-size:9.4px;color:#3e7fc8;font-weight:700;transform:scaleX(0.9733);">A</span>
<span class="t" id="t56" style="left:614.40px;top:84.84px;font-size:9.4px;color:#8a4fb0;font-weight:700;transform:scaleX(1.0114);">Z</span>
<span class="t" id="t57" style="left:645.60px;top:78.41px;font-size:14.4px;color:#e2e2e2;transform:scaleX(1.2929);">¶</span>
<span class="t" id="t58" style="left:519.80px;top:142.44px;font-size:12px;color:#e6e6e6;transform:scaleX(0.9242);">Paragraph</span>
<span class="t" id="t59" style="left:687.00px;top:86.51px;font-size:11.8px;color:#111;transform:scaleX(1.0502);-webkit-text-stroke:0.1px;clip-path:inset(0 2.48px 0 0);">AaBbCcDc</span>
<span class="t" id="t60" style="left:759.00px;top:86.51px;font-size:11.8px;color:#111;transform:scaleX(1.0502);-webkit-text-stroke:0.1px;clip-path:inset(0 2.48px 0 0);">AaBbCcDc</span>
<span class="t" id="t61" style="left:831.00px;top:83.67px;font-size:17.4px;color:#6f86a8;transform:scaleX(1.0189);-webkit-text-stroke:0;clip-path:inset(0 6.87px 0 0);">AaBbCc</span>
<span class="t" id="t62" style="left:903.00px;top:84.55px;font-size:14px;color:#748db0;transform:scaleX(1.0249);-webkit-text-stroke:0;clip-path:inset(0 4.88px 0 0);">AaBbCcD</span>
<span class="t" id="t63" style="left:975.20px;top:69.96px;font-size:33.6px;color:#1c1c1c;transform:scaleX(0.8666);-webkit-text-stroke:0;clip-path:inset(6.04px 0 0 0);">AaB</span>
<span class="t" id="t64" style="left:1046.60px;top:87.15px;font-size:11.4px;color:#808080;transform:scaleX(1.0326);-webkit-text-stroke:0;letter-spacing:1.1px;">AaBbCcD</span>
<span class="t" id="t65" style="left:691.30px;top:110.54px;font-size:12px;color:#4a4a4a;transform:scaleX(0.9927);">¶ Normal</span>
<span class="t" id="t66" style="left:757.30px;top:110.54px;font-size:12px;color:#4a4a4a;transform:scaleX(0.9345);">¶ No Spac...</span>
<span class="t" id="t67" style="left:833.70px;top:110.54px;font-size:12px;color:#4a4a4a;transform:scaleX(0.9521);">Heading 1</span>
<span class="t" id="t68" style="left:905.70px;top:110.54px;font-size:12px;color:#4a4a4a;transform:scaleX(0.9741);">Heading 2</span>
<span class="t" id="t69" style="left:993.30px;top:110.54px;font-size:12px;color:#4a4a4a;transform:scaleX(0.9850);">Title</span>
<span class="t" id="t70" style="left:1056.00px;top:110.54px;font-size:12px;color:#4a4a4a;transform:scaleX(1.0092);">Subtitle</span>
<span class="t" id="t71" style="left:881.40px;top:142.44px;font-size:12px;color:#e6e6e6;transform:scaleX(0.8566);">Styles</span>
<span class="t" id="t72" style="left:1169.60px;top:72.64px;font-size:12px;color:#f2f2f2;transform:scaleX(0.9339);">Find</span>
<span class="t" id="t73" style="left:1169.60px;top:95.84px;font-size:12px;color:#f2f2f2;transform:scaleX(0.9221);">Replace</span>
<span class="t" id="t74" style="left:1169.60px;top:118.64px;font-size:12px;color:#f2f2f2;transform:scaleX(0.8873);">Select</span>
<span class="t" id="t75" style="left:1163.60px;top:142.44px;font-size:12px;color:#e6e6e6;transform:scaleX(0.9699);">Editing</span>
<svg class="px" style="left:460px;top:-3px;" width="132" height="72" viewBox="0 0 132 72"><rect x="36" y="0" width="6" height="6" fill="#0c0606"/><rect x="42" y="0" width="6" height="6" fill="#a0714f"/><rect x="48" y="0" width="12" height="6" fill="#0c0606"/><rect x="60" y="0" width="6" height="6" fill="#4e3522"/><rect x="66" y="0" width="6" height="6" fill="#0c0606"/><rect x="72" y="0" width="30" height="6" fill="#a0714f"/><rect x="102" y="0" width="12" height="6" fill="#0c0606"/><rect x="36" y="6" width="6" height="6" fill="#0c0606"/><rect x="42" y="6" width="54" height="6" fill="#a0714f"/><rect x="96" y="6" width="18" height="6" fill="#0c0606"/><rect x="18" y="12" width="18" height="6" fill="#0c0606"/><rect x="36" y="12" width="6" height="6" fill="#93705f"/><rect x="42" y="12" width="6" height="6" fill="#a0714f"/><rect x="48" y="12" width="18" height="6" fill="#c8a88c"/><rect x="66" y="12" width="12" height="6" fill="#a0714f"/><rect x="78" y="12" width="36" height="6" fill="#c8a88c"/><rect x="114" y="12" width="6" height="6" fill="#0c0606"/><rect x="12" y="18" width="6" height="6" fill="#0c0606"/><rect x="18" y="18" width="18" height="6" fill="#c8a88c"/><rect x="36" y="18" width="6" height="6" fill="#93705f"/><rect x="42" y="18" width="18" height="6" fill="#c8a88c"/><rect x="60" y="18" width="12" height="6" fill="#a0714f"/><rect x="72" y="18" width="48" height="6" fill="#c8a88c"/><rect x="120" y="18" width="6" height="6" fill="#0c0606"/><rect x="6" y="24" width="6" height="6" fill="#0c0606"/><rect x="12" y="24" width="6" height="6" fill="#fbd2a4"/><rect x="18" y="24" width="24" height="6" fill="#0c0606"/><rect x="42" y="24" width="12" height="6" fill="#c8a88c"/><rect x="54" y="24" width="12" height="6" fill="#a0714f"/><rect x="66" y="24" width="36" height="6" fill="#c8a88c"/><rect x="102" y="24" width="6" height="6" fill="#4e3522"/><rect x="108" y="24" width="18" height="6" fill="#c8a88c"/><rect x="126" y="24" width="6" height="6" fill="#0c0606"/><rect x="12" y="30" width="6" height="6" fill="#0c0606"/><rect x="42" y="30" width="24" height="6" fill="#0c0606"/><rect x="66" y="30" width="24" height="6" fill="#c8a88c"/><rect x="90" y="30" width="6" height="6" fill="#4e3522"/><rect x="96" y="30" width="18" height="6" fill="#c8a88c"/><rect x="114" y="30" width="6" height="6" fill="#4e3522"/><rect x="120" y="30" width="6" height="6" fill="#c8a88c"/><rect x="126" y="30" width="6" height="6" fill="#0c0606"/><rect x="60" y="36" width="6" height="6" fill="#0c0606"/><rect x="66" y="36" width="24" height="6" fill="#c8a88c"/><rect x="90" y="36" width="6" height="6" fill="#4e3522"/><rect x="96" y="36" width="18" height="6" fill="#c8a88c"/><rect x="114" y="36" width="6" height="6" fill="#4e3522"/><rect x="120" y="36" width="6" height="6" fill="#c8a88c"/><rect x="126" y="36" width="6" height="6" fill="#0c0606"/><rect x="66" y="42" width="6" height="6" fill="#0c0606"/><rect x="72" y="42" width="48" height="6" fill="#c8a88c"/><rect x="120" y="42" width="6" height="6" fill="#0c0606"/><rect x="66" y="48" width="6" height="6" fill="#0c0606"/><rect x="72" y="48" width="48" height="6" fill="#c8a88c"/><rect x="120" y="48" width="6" height="6" fill="#0c0606"/><rect x="66" y="54" width="6" height="6" fill="#0c0606"/><rect x="72" y="54" width="6" height="6" fill="#c8a88c"/><rect x="78" y="54" width="6" height="6" fill="#fbd2a4"/><rect x="84" y="54" width="6" height="6" fill="#c8a88c"/><rect x="90" y="54" width="18" height="6" fill="#0c0606"/><rect x="108" y="54" width="6" height="6" fill="#c8a88c"/><rect x="114" y="54" width="6" height="6" fill="#fbd2a4"/><rect x="120" y="54" width="6" height="6" fill="#0c0606"/><rect x="72" y="60" width="6" height="6" fill="#0c0606"/><rect x="78" y="60" width="6" height="6" fill="#e0bd99"/><rect x="84" y="60" width="6" height="6" fill="#0c0606"/><rect x="108" y="60" width="6" height="6" fill="#0c0606"/><rect x="114" y="60" width="6" height="6" fill="#e0bd99"/><rect x="120" y="60" width="6" height="6" fill="#0c0606"/><rect x="78" y="66" width="6" height="6" fill="#0c0606"/><rect x="114" y="66" width="6" height="6" fill="#0c0606"/></svg>
<svg class="" style="left:595px;top:168px;filter:blur(0.6px);" width="90" height="90" viewBox="0 0 90 90"><rect x="30" y="0" width="30" height="6" fill="#5e2d10"/><rect x="18" y="6" width="12" height="6" fill="#5e2d10"/><rect x="30" y="6" width="6" height="6" fill="#c87232"/><rect x="36" y="6" width="6" height="6" fill="#5e2d10"/><rect x="42" y="6" width="18" height="6" fill="#a85c26"/><rect x="60" y="6" width="12" height="6" fill="#5e2d10"/><rect x="12" y="12" width="6" height="6" fill="#5e2d10"/><rect x="18" y="12" width="12" height="6" fill="#a85c26"/><rect x="30" y="12" width="6" height="6" fill="#5e2d10"/><rect x="36" y="12" width="24" height="6" fill="#ea7a26"/><rect x="60" y="12" width="6" height="6" fill="#5e2d10"/><rect x="66" y="12" width="6" height="6" fill="#a85c26"/><rect x="72" y="12" width="6" height="6" fill="#5e2d10"/><rect x="6" y="18" width="6" height="6" fill="#4a2710"/><rect x="12" y="18" width="6" height="6" fill="#a85c26"/><rect x="18" y="18" width="12" height="6" fill="#ea7a26"/><rect x="30" y="18" width="6" height="6" fill="#5e2d10"/><rect x="36" y="18" width="18" height="6" fill="#ea7a26"/><rect x="54" y="18" width="6" height="6" fill="#5e2d10"/><rect x="60" y="18" width="12" height="6" fill="#ea7a26"/><rect x="72" y="18" width="6" height="6" fill="#a85c26"/><rect x="78" y="18" width="6" height="6" fill="#5e2d10"/><rect x="6" y="24" width="12" height="6" fill="#5e2d10"/><rect x="18" y="24" width="6" height="6" fill="#ea7a26"/><rect x="24" y="24" width="6" height="6" fill="#5e2d10"/><rect x="30" y="24" width="18" height="6" fill="#ea7a26"/><rect x="48" y="24" width="6" height="6" fill="#5e2d10"/><rect x="54" y="24" width="18" height="6" fill="#ea7a26"/><rect x="72" y="24" width="6" height="6" fill="#a85c26"/><rect x="78" y="24" width="6" height="6" fill="#5e2d10"/><rect x="0" y="30" width="6" height="6" fill="#4a2710"/><rect x="6" y="30" width="6" height="6" fill="#a85c26"/><rect x="12" y="30" width="6" height="6" fill="#5e2d10"/><rect x="18" y="30" width="6" height="6" fill="#ea7a26"/><rect x="24" y="30" width="6" height="6" fill="#5e2d10"/><rect x="30" y="30" width="12" height="6" fill="#ea7a26"/><rect x="42" y="30" width="6" height="6" fill="#5e2d10"/><rect x="48" y="30" width="30" height="6" fill="#ea7a26"/><rect x="78" y="30" width="6" height="6" fill="#a85c26"/><rect x="84" y="30" width="6" height="6" fill="#4a2710"/><rect x="0" y="36" width="6" height="6" fill="#4a2710"/><rect x="6" y="36" width="6" height="6" fill="#a85c26"/><rect x="12" y="36" width="6" height="6" fill="#ea7a26"/><rect x="18" y="36" width="24" height="6" fill="#5e2d10"/><rect x="42" y="36" width="36" height="6" fill="#ea7a26"/><rect x="78" y="36" width="6" height="6" fill="#a85c26"/><rect x="84" y="36" width="6" height="6" fill="#4a2710"/><rect x="0" y="42" width="6" height="6" fill="#4a2710"/><rect x="6" y="42" width="6" height="6" fill="#a85c26"/><rect x="12" y="42" width="12" height="6" fill="#ea7a26"/><rect x="24" y="42" width="6" height="6" fill="#5e2d10"/><rect x="30" y="42" width="48" height="6" fill="#ea7a26"/><rect x="78" y="42" width="6" height="6" fill="#5e2d10"/><rect x="84" y="42" width="6" height="6" fill="#4a2710"/><rect x="0" y="48" width="6" height="6" fill="#4a2710"/><rect x="6" y="48" width="6" height="6" fill="#5e2d10"/><rect x="12" y="48" width="12" height="6" fill="#ea7a26"/><rect x="24" y="48" width="6" height="6" fill="#5e2d10"/><rect x="30" y="48" width="42" height="6" fill="#ea7a26"/><rect x="72" y="48" width="6" height="6" fill="#5e2d10"/><rect x="78" y="48" width="6" height="6" fill="#a85c26"/><rect x="84" y="48" width="6" height="6" fill="#4a2710"/><rect x="0" y="54" width="6" height="6" fill="#4a2710"/><rect x="6" y="54" width="6" height="6" fill="#a85c26"/><rect x="12" y="54" width="6" height="6" fill="#5e2d10"/><rect x="18" y="54" width="6" height="6" fill="#ea7a26"/><rect x="24" y="54" width="6" height="6" fill="#5e2d10"/><rect x="30" y="54" width="30" height="6" fill="#ea7a26"/><rect x="60" y="54" width="12" height="6" fill="#5e2d10"/><rect x="72" y="54" width="12" height="6" fill="#a85c26"/><rect x="84" y="54" width="6" height="6" fill="#4a2710"/><rect x="6" y="60" width="6" height="6" fill="#5e2d10"/><rect x="12" y="60" width="6" height="6" fill="#a85c26"/><rect x="18" y="60" width="42" height="6" fill="#5e2d10"/><rect x="60" y="60" width="18" height="6" fill="#a85c26"/><rect x="78" y="60" width="6" height="6" fill="#5e2d10"/><rect x="6" y="66" width="6" height="6" fill="#4a2710"/><rect x="12" y="66" width="6" height="6" fill="#5e2d10"/><rect x="18" y="66" width="6" height="6" fill="#a85c26"/><rect x="24" y="66" width="6" height="6" fill="#c87232"/><rect x="30" y="66" width="6" height="6" fill="#5e2d10"/><rect x="36" y="66" width="24" height="6" fill="#ea7a26"/><rect x="60" y="66" width="18" height="6" fill="#a85c26"/><rect x="78" y="66" width="6" height="6" fill="#4a2710"/><rect x="12" y="72" width="6" height="6" fill="#4a2710"/><rect x="18" y="72" width="18" height="6" fill="#a85c26"/><rect x="36" y="72" width="6" height="6" fill="#5e2d10"/><rect x="42" y="72" width="30" height="6" fill="#a85c26"/><rect x="72" y="72" width="6" height="6" fill="#5e2d10"/><rect x="78" y="72" width="6" height="6" fill="#4a2710"/><rect x="18" y="78" width="6" height="6" fill="#4a2710"/><rect x="24" y="78" width="6" height="6" fill="#5e2d10"/><rect x="30" y="78" width="12" height="6" fill="#a85c26"/><rect x="42" y="78" width="6" height="6" fill="#5e2d10"/><rect x="48" y="78" width="18" height="6" fill="#a85c26"/><rect x="66" y="78" width="6" height="6" fill="#5e2d10"/><rect x="72" y="78" width="6" height="6" fill="#4a2710"/><rect x="30" y="84" width="30" height="6" fill="#4a2710"/></svg>
<svg class="px" style="left:957px;top:338px;" width="264" height="114" viewBox="0 0 264 114"><rect x="126" y="6" width="24" height="6" fill="#0a0808"/><rect x="126" y="12" width="6" height="6" fill="#0a0808"/><rect x="132" y="12" width="18" height="6" fill="#d7d7d7"/><rect x="150" y="12" width="12" height="6" fill="#0a0808"/><rect x="132" y="18" width="30" height="6" fill="#d7d7d7"/><rect x="162" y="18" width="18" height="6" fill="#0a0808"/><rect x="42" y="24" width="30" height="6" fill="#0a0808"/><rect x="72" y="24" width="108" height="6" fill="#d7d7d7"/><rect x="180" y="24" width="18" height="6" fill="#0a0808"/><rect x="12" y="30" width="30" height="6" fill="#0a0808"/><rect x="42" y="30" width="156" height="6" fill="#d7d7d7"/><rect x="198" y="30" width="12" height="6" fill="#0a0808"/><rect x="0" y="36" width="6" height="6" fill="#2a2a36"/><rect x="6" y="36" width="6" height="6" fill="#0a0808"/><rect x="12" y="36" width="198" height="6" fill="#d7d7d7"/><rect x="210" y="36" width="12" height="6" fill="#0a0808"/><rect x="0" y="42" width="6" height="6" fill="#2a2a36"/><rect x="6" y="42" width="6" height="6" fill="#c9c9c9"/><rect x="12" y="42" width="210" height="6" fill="#d7d7d7"/><rect x="222" y="42" width="18" height="6" fill="#0a0808"/><rect x="0" y="48" width="6" height="6" fill="#2a2a36"/><rect x="6" y="48" width="6" height="6" fill="#c9c9c9"/><rect x="12" y="48" width="12" height="6" fill="#b4b4b4"/><rect x="24" y="48" width="216" height="6" fill="#d7d7d7"/><rect x="240" y="48" width="12" height="6" fill="#0a0808"/><rect x="6" y="54" width="6" height="6" fill="#2a2a36"/><rect x="12" y="54" width="24" height="6" fill="#b4b4b4"/><rect x="36" y="54" width="216" height="6" fill="#d7d7d7"/><rect x="252" y="54" width="6" height="6" fill="#0a0808"/><rect x="12" y="60" width="6" height="6" fill="#2c2c46"/><rect x="18" y="60" width="30" height="6" fill="#b4b4b4"/><rect x="48" y="60" width="186" height="6" fill="#d7d7d7"/><rect x="234" y="60" width="24" height="6" fill="#b4b4b4"/><rect x="258" y="60" width="6" height="6" fill="#0a0808"/><rect x="18" y="66" width="12" height="6" fill="#0a0808"/><rect x="30" y="66" width="30" height="6" fill="#b4b4b4"/><rect x="60" y="66" width="150" height="6" fill="#d7d7d7"/><rect x="210" y="66" width="48" height="6" fill="#b4b4b4"/><rect x="258" y="66" width="6" height="6" fill="#0a0808"/><rect x="30" y="72" width="6" height="6" fill="#0a0808"/><rect x="36" y="72" width="36" height="6" fill="#b4b4b4"/><rect x="72" y="72" width="108" height="6" fill="#d7d7d7"/><rect x="180" y="72" width="60" height="6" fill="#b4b4b4"/><rect x="240" y="72" width="18" height="6" fill="#0a0808"/><rect x="36" y="78" width="12" height="6" fill="#0a0808"/><rect x="48" y="78" width="36" height="6" fill="#b4b4b4"/><rect x="84" y="78" width="72" height="6" fill="#d7d7d7"/><rect x="156" y="78" width="66" height="6" fill="#b4b4b4"/><rect x="222" y="78" width="18" height="6" fill="#0a0808"/><rect x="48" y="84" width="12" height="6" fill="#0a0808"/><rect x="60" y="84" width="36" height="6" fill="#b4b4b4"/><rect x="96" y="84" width="30" height="6" fill="#d7d7d7"/><rect x="126" y="84" width="72" height="6" fill="#b4b4b4"/><rect x="198" y="84" width="24" height="6" fill="#0a0808"/><rect x="60" y="90" width="12" height="6" fill="#0a0808"/><rect x="72" y="90" width="102" height="6" fill="#b4b4b4"/><rect x="174" y="90" width="24" height="6" fill="#0a0808"/><rect x="72" y="96" width="12" height="6" fill="#0a0808"/><rect x="84" y="96" width="72" height="6" fill="#b4b4b4"/><rect x="156" y="96" width="18" height="6" fill="#0a0808"/><rect x="84" y="102" width="12" height="6" fill="#0a0808"/><rect x="96" y="102" width="30" height="6" fill="#b4b4b4"/><rect x="126" y="102" width="30" height="6" fill="#0a0808"/><rect x="96" y="108" width="30" height="6" fill="#0a0808"/></svg>
<svg class="px" style="left:957px;top:335px;" width="264" height="66" viewBox="0 0 264 66"><rect x="78" y="0" width="6" height="6" fill="#0a0606"/><rect x="114" y="0" width="6" height="6" fill="#0a0606"/><rect x="72" y="6" width="6" height="6" fill="#0a0606"/><rect x="78" y="6" width="6" height="6" fill="#b08d6e"/><rect x="84" y="6" width="6" height="6" fill="#0a0606"/><rect x="108" y="6" width="6" height="6" fill="#0a0606"/><rect x="114" y="6" width="6" height="6" fill="#b08d6e"/><rect x="120" y="6" width="6" height="6" fill="#0a0606"/><rect x="72" y="12" width="6" height="6" fill="#0a0606"/><rect x="78" y="12" width="6" height="6" fill="#fbd2a4"/><rect x="84" y="12" width="6" height="6" fill="#aa8769"/><rect x="90" y="12" width="18" height="6" fill="#0a0606"/><rect x="108" y="12" width="6" height="6" fill="#aa8769"/><rect x="114" y="12" width="6" height="6" fill="#fbd2a4"/><rect x="120" y="12" width="6" height="6" fill="#aa8769"/><rect x="126" y="12" width="6" height="6" fill="#0a0606"/><rect x="72" y="18" width="6" height="6" fill="#0a0606"/><rect x="78" y="18" width="48" height="6" fill="#aa8769"/><rect x="126" y="18" width="6" height="6" fill="#0a0606"/><rect x="72" y="24" width="6" height="6" fill="#0a0606"/><rect x="78" y="24" width="48" height="6" fill="#aa8769"/><rect x="126" y="24" width="6" height="6" fill="#0a0606"/><rect x="138" y="24" width="24" height="6" fill="#0a0606"/><rect x="66" y="30" width="6" height="6" fill="#0a0606"/><rect x="72" y="30" width="60" height="6" fill="#aa8769"/><rect x="132" y="30" width="6" height="6" fill="#0a0606"/><rect x="138" y="30" width="12" height="6" fill="#7c543b"/><rect x="150" y="30" width="12" height="6" fill="#b4906f"/><rect x="162" y="30" width="6" height="6" fill="#0a0606"/><rect x="66" y="36" width="6" height="6" fill="#0a0606"/><rect x="72" y="36" width="60" height="6" fill="#aa8769"/><rect x="132" y="36" width="12" height="6" fill="#7c543b"/><rect x="144" y="36" width="18" height="6" fill="#b4906f"/><rect x="162" y="36" width="6" height="6" fill="#7c543b"/><rect x="168" y="36" width="6" height="6" fill="#0a0606"/><rect x="66" y="42" width="6" height="6" fill="#0a0606"/><rect x="72" y="42" width="12" height="6" fill="#96705a"/><rect x="84" y="42" width="18" height="6" fill="#aa8769"/><rect x="102" y="42" width="12" height="6" fill="#8a6645"/><rect x="114" y="42" width="18" height="6" fill="#aa8769"/><rect x="132" y="42" width="6" height="6" fill="#7c543b"/><rect x="138" y="42" width="18" height="6" fill="#b4906f"/><rect x="156" y="42" width="18" height="6" fill="#7c543b"/><rect x="174" y="42" width="6" height="6" fill="#0a0606"/><rect x="72" y="48" width="6" height="6" fill="#0a0606"/><rect x="78" y="48" width="12" height="6" fill="#aa8769"/><rect x="90" y="48" width="6" height="6" fill="#5a3d22"/><rect x="96" y="48" width="30" height="6" fill="#aa8769"/><rect x="126" y="48" width="48" height="6" fill="#7c543b"/><rect x="174" y="48" width="30" height="6" fill="#0a0606"/><rect x="78" y="54" width="6" height="6" fill="#0a0606"/><rect x="84" y="54" width="36" height="6" fill="#aa8769"/><rect x="120" y="54" width="78" height="6" fill="#7c543b"/><rect x="198" y="54" width="6" height="6" fill="#aa8769"/><rect x="204" y="54" width="6" height="6" fill="#0a0606"/><rect x="84" y="60" width="120" height="6" fill="#0a0606"/></svg>
<svg class="px" style="left:585px;top:448px" width="120" height="43" viewBox="0 0 120 43"><defs><linearGradient id="pg" gradientUnits="userSpaceOnUse" x1="0" y1="0" x2="0" y2="43"><stop offset="0" stop-color="#93a6b3"/><stop offset="0.1" stop-color="#9fb1bd"/><stop offset="0.6" stop-color="#9dafbb"/><stop offset="0.75" stop-color="#93a5b2"/><stop offset="1" stop-color="#8fa1ae"/></linearGradient></defs><g fill="url(#pg)"><rect x="12" y="0" width="96" height="3"/><rect x="9" y="3" width="102" height="3"/><rect x="6" y="6" width="108" height="3"/><rect x="3" y="9" width="114" height="6"/><rect x="0" y="15" width="120" height="13"/><rect x="3" y="28" width="114" height="6"/><rect x="6" y="34" width="108" height="3"/><rect x="9" y="37" width="102" height="3"/><rect x="12" y="40" width="96" height="3"/></g><rect x="27" y="13" width="2" height="27" fill="#8799a6"/><rect x="90" y="13" width="2" height="27" fill="#8799a6"/><rect x="29" y="8" width="2" height="5" fill="#8a9ca9"/><rect x="88" y="8" width="2" height="5" fill="#8a9ca9"/></svg>
<svg style="left:645px;top:447px" width="13" height="20" viewBox="0 0 13 20"><path d="M0.5,0.5 L0.5,16 L4,12.6 L6.6,18.6 L9,17.6 L6.5,11.8 L11.5,11.8 Z" fill="#fff" stroke="#111" stroke-width="1"/></svg>
<div class="a" style="left:1059px;top:664px;width:221px;height:56px;background:#fe0000;"></div>
<svg style="left:1063px;top:664.6px;" width="56" height="56" viewBox="0 0 56 56"><path d="M10.2,2.4 H25.2 V52.2 H10.2 A7.6,7.6 0 0 1 2.6,44.6 V10 A7.6,7.6 0 0 1 10.2,2.4 Z" fill="none" stroke="#fff" stroke-width="4.8"/><circle cx="14.2" cy="16.3" r="5" fill="#fff"/><path d="M32.2,0 H44.5 A10,10 0 0 1 54.5,10 V44.6 A10,10 0 0 1 44.5,54.6 H32.2 Z" fill="#fff"/><circle cx="43.3" cy="29.8" r="5.5" fill="#fe0000"/></svg>
</div></body></html>
